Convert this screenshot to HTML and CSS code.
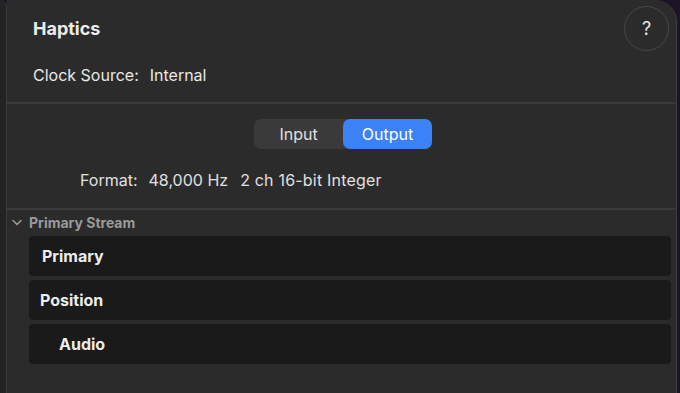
FILE: index.html
```html
<!DOCTYPE html>
<html>
<head>
<meta charset="utf-8">
<link rel="stylesheet" href="styles.css">
</head>
<body>
<div class="desk">
  <div class="side"></div>
  <div class="panel">
    <div class="head">
      <div class="head-text">
        <h1 class="title">Haptics</h1>
        <div class="clock"><span class="lbl">Clock Source:</span><span class="val">Internal</span></div>
      </div>
      <button class="help">?</button>
    </div>
    <div class="divider"></div>
    <div class="mid">
      <div class="seg">
        <div class="seg-item">Input</div>
        <div class="seg-item active">Output</div>
      </div>
      <div class="format"><span class="lbl">Format:</span><span class="val">48,000 Hz</span><span class="val wide">2 ch 16-bit Integer</span></div>
    </div>
    <div class="divider"></div>
    <div class="stream">
      <div class="stream-head">
        <svg class="chev" width="10" height="7" viewBox="0 0 10 7"><path d="M1 1.5 L5 5.5 L9 1.5" fill="none" stroke="#9a9a9a" stroke-width="1.6" stroke-linecap="round" stroke-linejoin="round"/></svg>
        <span>Primary Stream</span>
      </div>
      <div class="rows">
        <div class="row r1">Primary</div>
        <div class="row r2">Position</div>
        <div class="row r3">Audio</div>
      </div>
    </div>
  </div>
</div>
</body>
</html>
```
FILE: styles.css
```css
html, body {
  margin: 0;
  padding: 0;
  background: #1d1428;
  font-family: Inter, "Noto Sans", sans-serif;
  color: #e6e6e6;
}
.desk {
  display: flex;
  width: 680px;
  height: 393px;
  overflow: hidden;
}
.side {
  width: 6px;
  flex: none;
  background: #232323;
  border-right: 1px solid #3b3b3b;
  border-top-right-radius: 10px;
}
.panel {
  flex: 1;
  margin-right: 3px;
  background: #2b2b2b;
  border-right: 1px solid #3e3e3e;
  border-top-right-radius: 22px;
  display: flex;
  flex-direction: column;
}
.head {
  display: flex;
  justify-content: space-between;
  padding: 6px 7px 0 26px;
  height: 96px;
}
.title {
  margin: 0;
  padding-top: 12px;
  font-size: 18px;
  font-weight: 700;
  color: #ececec;
  line-height: 22px;
}
.clock {
  margin-top: 25px;
  font-size: 16px;
  line-height: 20px;
  color: #e8e8e8;
}
.lbl { margin-right: 11px; }
.val { margin-right: 12px; }
.wide { letter-spacing: 0.2px; }
.help {
  width: 45px;
  height: 45px;
  border-radius: 50%;
  border: 1px solid #474747;
  background: #2b2b2b;
  color: #e6e6e6;
  font-family: Inter, sans-serif;
  font-size: 18px;
  padding: 0;
}
.divider {
  height: 2px;
  background: #3a3a3a;
}
.mid {
  height: 104px;
  display: flex;
  flex-direction: column;
  padding-top: 15px;
  box-sizing: border-box;
}
.seg {
  align-self: center;
  display: flex;
  background: #3a3a3a;
  border-radius: 7px;
  height: 30px;
  margin-left: 3px;
}
.seg-item {
  width: 89px;
  display: flex;
  align-items: center;
  justify-content: center;
  font-size: 16px;
  color: #e0e0e0;
  border-radius: 7px;
}
.seg-item.active {
  background: #3a82f6;
  color: #ffffff;
}
.format {
  margin-top: 21px;
  padding-left: 73px;
  font-size: 16px;
  line-height: 20px;
  color: #e0e0e0;
}
.stream {
  display: flex;
  flex-direction: column;
  padding: 4px 5px 0 5px;
}
.stream-head {
  display: flex;
  align-items: center;
  gap: 7px;
  height: 16px;
  font-size: 14px;
  font-weight: 700;
  color: #9a9a9a;
}
.rows {
  display: flex;
  flex-direction: column;
  gap: 4px;
  margin-top: 6px;
  padding-left: 17px;
}
.row {
  height: 40px;
  background: #1a1a1a;
  border-radius: 4px;
  display: flex;
  align-items: center;
  font-size: 16px;
  font-weight: 700;
  color: #ececec;
}
.r1 { padding-left: 13px; }
.r2 { padding-left: 11px; }
.r3 { padding-left: 30px; }
```
